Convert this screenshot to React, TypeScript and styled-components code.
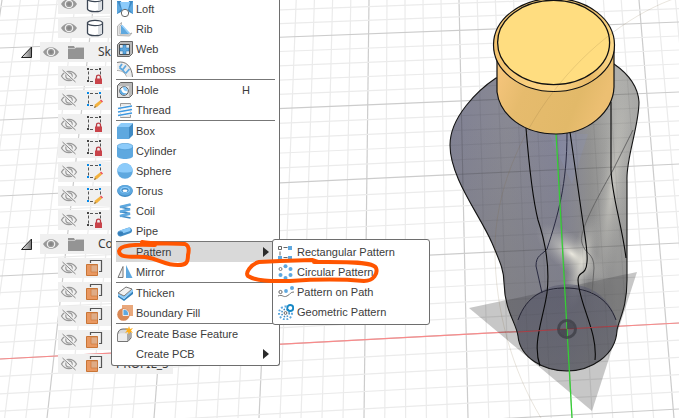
import React from "react";
import styled, { createGlobalStyle } from "styled-components";

const GlobalStyle = createGlobalStyle`
  body {
    margin: 0;
    background: #ffffff;
    color: #3c3c3c;
    font-family: "Liberation Sans", Arial, sans-serif;
    font-size: 11px;
  }
`;

const Workspace = styled.main`
  position: relative;
  display: flex;
  min-height: 100vh;
  overflow: hidden;
`;

const Viewport = styled.svg`
  position: absolute;
  inset: 0;
  width: 100%;
  height: 100%;
`;

const Browser = styled.ul`
  position: relative;
  display: flex;
  flex-direction: column;
  gap: 4px;
  margin: -6px 0 0;
  padding: 0;
  list-style: none;
`;

const TreeRow = styled.li<{ $folder?: boolean }>`
  display: flex;
  align-items: center;
  height: 20px;
  padding-left: ${(p) => (p.$folder ? 20 : 58)}px;
`;

const TreeCell = styled.div<{ $folder?: boolean }>`
  display: flex;
  align-items: center;
  box-sizing: border-box;
  height: 20px;
  width: ${(p) => (p.$folder ? 72 : 115)}px;
  padding-left: 2px;
  overflow: hidden;
  background: #f0f0f0;
`;

const PlainButton = styled.button`
  display: flex;
  padding: 0;
  border: 0;
  background: none;
`;

const Toggle = styled(PlainButton)`
  width: 20px;
`;

const TreeIcon = styled.span`
  display: flex;
  width: 18px;
  margin: 0 12px 0 8px;
`;

const TreeLabel = styled.span`
  flex: 1;
  min-width: 0;
  overflow: hidden;
  font-family: "Noto Sans", sans-serif;
  font-size: 12px;
  line-height: 18px;
  white-space: nowrap;
`;

const Menu = styled.div`
  position: absolute;
  top: -1px;
  left: 111px;
  box-sizing: border-box;
  width: 169px;
  padding: 0 4px 1px;
  border: 1px solid #6e6e6e;
  border-top: 0;
  border-radius: 0 0 3px 3px;
  background: #ffffff;
`;

const MenuSlot = styled.div`
  position: relative;
`;

const Submenu = styled.div`
  position: absolute;
  top: -3px;
  left: 156px;
  box-sizing: border-box;
  width: 158px;
  padding: 2px 4px;
  border: 1px solid #6e6e6e;
  border-radius: 3px;
  background: #ffffff;
`;

const MenuItem = styled.button<{ $active?: boolean }>`
  display: flex;
  align-items: center;
  width: 100%;
  height: 20px;
  padding: 0 6px 0 1px;
  border: 0;
  background: ${(p) => (p.$active ? "#d9d9d9" : "transparent")};
  color: #3c3c3c;
  font-family: inherit;
  font-size: 11px;
  line-height: 20px;
  text-align: left;
  white-space: nowrap;
`;

const MenuIcon = styled.span`
  display: flex;
  width: 16px;
  height: 16px;
  margin-right: 3px;
`;

const MenuText = styled.span`
  flex: 1;
`;

const Shortcut = styled.kbd`
  width: 27px;
  font-family: inherit;
  font-size: 11px;
`;

const Separator = styled.hr`
  height: 1px;
  margin: 0;
  border: 0;
  background: #777777;
`;

const Markup = styled.svg`
  position: absolute;
  top: 0;
  left: -1px;
  overflow: visible;
  pointer-events: none;
`;

const Icon = ({ children, size = 16 }: { children: React.ReactNode; size?: number }) => (
  <svg width={size} height={size} viewBox={`0 0 ${size} ${size}`} fill="none" aria-hidden="true">
    {children}
  </svg>
);

const BLUE = "#5ea8df";
const DEEP = "#3f8ac4";
const PALE = "#8ccbfa";

const icons: Record<string, React.ReactNode> = {
  Loft: (
    <Icon>
      <path d="M0 0h4l2 9-2 2-4 2zM16 0h-4l-2 9 2 2 4 2z" fill={DEEP} />
      <path d="M3 1h10l-2 8H5z" fill={PALE} />
      <path d="M0 0l4 8-4 5z" fill={BLUE} />
      <path d="M16 0l-4 8 4 5z" fill={BLUE} />
      <circle cx="8" cy="12" r="3.7" fill="#fff" stroke="#666" />
    </Icon>
  ),
  Rib: (
    <Icon>
      <path d="M.5 14.500V5l4-3.500v2L3 5v8h9l3-1-2.500 3z" fill="#e4e4e4" stroke="#a5a5a5" strokeWidth=".8" />
      <path d="M4 4l8 9H4z" fill={BLUE} />
      <path d="M4 4h1.500l7.500 8-1 1z" fill={PALE} />
    </Icon>
  ),
  Web: (
    <Icon>
      <path d="M.5 3.500l3-3h12v12l-3 3H.5z" fill="#b9b9b9" stroke="#666" />
      <path d="M2.500 3.500h10v10h-10z" fill="#e0e9f0" stroke="#4d4d4d" />
      <path d="M6 4h3v3h3v3H9v3H6v-3H3V7h3z" fill={BLUE} stroke="#276ca4" strokeWidth=".5" />
    </Icon>
  ),
  Emboss: (
    <Icon>
      <path d="M0 1.500C9-1 15 6 15.500 16H10C9 11 5 8.500 0 9z" fill="#ececec" />
      <path d="M0 1.500C9-1 15 6 15.500 16" stroke="#777" />
      <path d="M2.500 6.500l3 2.500 3 3.500M5.500 9L9 4.500M2.500 6.500L5 3M8.500 12.500L12.500 8" stroke={BLUE} strokeWidth="1.800" />
      <path d="M0 9.500c5 0 8 2 9.500 6" stroke="#aaa" />
    </Icon>
  ),
  Hole: (
    <Icon>
      <path d="M.5 3.500l3-3h12v12l-3 3H.5z" fill="#b9b9b9" stroke="#666" />
      <path d="M1 4h11v11H1z" fill="#dedede" />
      <circle cx="7" cy="9" r="4.300" fill="#fff" stroke="#555" />
      <path d="M4 7c1 4 3 5 6 4-1 2-5 3-7 0-.5-2 0-3 1-4z" fill={BLUE} />
      <path d="M6 5c2-1 5 1 4.500 4C8 10 6 8 6 5z" fill={PALE} />
    </Icon>
  ),
  Thread: (
    <Icon>
      <path d="M3.500 1.500h10v14h-10z" fill="#e8e8e8" stroke="#999" />
      <path d="M1 6.500L15 4M1 10l14-2.500M1 13.500L15 11" stroke="#fff" strokeWidth="3" />
      <path d="M1 6.500L15 4M1 10l14-2.500M1 13.500L15 11" stroke="#3f98df" strokeWidth="1.500" />
    </Icon>
  ),
  Box: (
    <Icon>
      <path d="M0 4h12v12H0z" fill={BLUE} />
      <path d="M0 4l4-4h12l-4 4z" fill={PALE} />
      <path d="M12 4l4-4v12l-4 4z" fill={DEEP} />
    </Icon>
  ),
  Cylinder: (
    <Icon>
      <path d="M0 3v10c0 4 16 4 16 0V3z" fill={BLUE} />
      <ellipse cx="8" cy="3.500" rx="8" ry="3.200" fill={PALE} stroke={DEEP} strokeWidth=".5" />
    </Icon>
  ),
  Sphere: (
    <Icon>
      <circle cx="8" cy="8" r="7.800" fill={BLUE} />
      <path d="M.2 8a7.800 7.800 0 0 1 15.600 0c-3 2-12 2-15.600 0z" fill={PALE} />
    </Icon>
  ),
  Torus: (
    <Icon>
      <ellipse cx="8" cy="8" rx="7.800" ry="6" fill={DEEP} />
      <ellipse cx="8" cy="7.300" rx="7.600" ry="5.200" fill={BLUE} />
      <ellipse cx="8" cy="7" rx="5" ry="3.200" fill={PALE} />
      <ellipse cx="8" cy="7.300" rx="3.500" ry="2.200" fill={DEEP} />
      <ellipse cx="8" cy="7.700" rx="2.500" ry="1.300" fill="#fff" />
    </Icon>
  ),
  Coil: (
    <Icon>
      <path d="M13.500 1.500L3 4l10 2.200L3 8.700l10 2L3 13l10.500 2" stroke={DEEP} strokeWidth="1.700" />
      <path d="M13.500 1.500L3 4M13 6.200L3 8.700M13 10.700L3 13" stroke={BLUE} strokeWidth="2.500" />
    </Icon>
  ),
  Pipe: (
    <Icon>
      <path d="M3.500 10.500L12 7.500" stroke={DEEP} strokeWidth="6" strokeLinecap="round" />
      <path d="M4 9L12 6.500" stroke={PALE} strokeWidth="3.500" strokeLinecap="round" />
      <ellipse cx="3.800" cy="10.300" rx="2.500" ry="2" fill="#377fb9" />
    </Icon>
  ),
  Mirror: (
    <Icon>
      <path d="M6 2.500v11H1z" fill="#eee" stroke="#777" />
      <path d="M9 1l6.500 13H9z" fill={BLUE} />
    </Icon>
  ),
  Thicken: (
    <Icon>
      <path d="M1 10l6 4 9-8v3l-9 7-6-4z" fill="#3483bd" />
      <path d="M1 8l6 3 9-7v2l-9 8-6-4z" fill={PALE} />
      <path d="M1 8l8-6 6 2-8 7z" fill="#f2f2f2" stroke="#777" />
    </Icon>
  ),
  "Boundary Fill": (
    <Icon>
      <path d="M5 0h11v11H5z" fill="#e9a87c" />
      <circle cx="6.500" cy="9.500" r="6.300" fill="#d98855" />
      <path d="M6 4.500c4-.5 6 2 5.500 6H6z" fill={BLUE} stroke="#fff" strokeWidth=".8" />
    </Icon>
  ),
  "Create Base Feature": (
    <Icon>
      <path d="M.7 8C1 5 3 3 6 3h5l3 4v5l-3 3.400H.7z" fill="#d7d7d7" stroke="#666" />
      <path d="M1 8c2-1 7-1 9 0v7H1z" fill="#ececec" />
      <path d="M10 8v7.500l4-4V6z" fill="#aaa" />
      <path d="M12 0l1 3 3-1-2 2.500 2 2.500-3-1-1 3-1-3-3 1 2-2.500L8 2l3 1z" fill="#ffad18" />
    </Icon>
  ),
  "Rectangular Pattern": (
    <Icon>
      <path d="M.5 2.500h3v3h-3z" stroke="#666" />
      <path d="M5.500 3.500h4M2 7.500v4M5.500 13.500h4" stroke="#666" />
      <path d="M10 2h4v4h-4zM0 12h4v4H0zM10 12h4v4h-4z" fill={BLUE} />
    </Icon>
  ),
  "Circular Pattern": (
    <Icon>
      <circle cx="2.500" cy="5" r="1.500" stroke="#777" />
      <g fill={BLUE}>
        <circle cx="7.500" cy="2.200" r="2" />
        <circle cx="12.500" cy="5" r="2" />
        <circle cx="12.500" cy="11" r="2" />
        <circle cx="7.500" cy="14" r="2" />
        <circle cx="2.500" cy="11" r="2" />
      </g>
    </Icon>
  ),
  "Pattern on Path": (
    <Icon>
      <circle cx="2.500" cy="8" r="1.600" stroke="#666" />
      <circle cx="8" cy="7" r="1.900" fill={BLUE} />
      <circle cx="14" cy="4" r="2" fill={BLUE} />
      <path d="M0 12c5-2 5 2 9 0s3-4 7-4" stroke="#777" />
    </Icon>
  ),
  "Geometric Pattern": (
    <Icon>
      <circle cx="7.500" cy="9" r="6.500" stroke={BLUE} strokeWidth="2" strokeDasharray="1.800 1.800" />
      <circle cx="7.500" cy="9" r="3.700" stroke={DEEP} strokeWidth="1.500" strokeDasharray="1.500 1.500" />
      <circle cx="7.500" cy="9" r="1.400" fill="#fff" stroke="#666" />
      <circle cx="12.200" cy="4" r="3" fill="#fff" stroke="#1688c6" strokeWidth="1.800" />
      <path d="M8.500 2l2 1M9 5.500h2" stroke="#1688c6" />
    </Icon>
  ),
};

const Eye = ({ hidden }: { hidden?: boolean }) => (
  <svg width="18" height="14" viewBox="0 0 18 14" fill="none" aria-hidden="true">
    {hidden ? (
      <>
        <path d="M1.500 7C5 .8 13 .8 16.500 7 13 13.200 5 13.200 1.500 7z" stroke="#999" strokeWidth="1.200" />
        <circle cx="9" cy="7" r="3.200" stroke="#999" strokeWidth="1.200" />
        <path d="M3 1l13 12" stroke="#f0f0f0" strokeWidth="2.500" />
        <path d="M2.500 1l13 12" stroke="#858585" />
      </>
    ) : (
      <>
        <path d="M1 7C5 .5 13 .5 17 7 13 13.500 5 13.500 1 7z" fill="#999" />
        <circle cx="9" cy="7" r="3.700" stroke="#f0f0f0" strokeWidth="1.200" />
        <circle cx="9" cy="7" r="1.800" fill="#858585" />
      </>
    )}
  </svg>
);

const Body = () => (
  <Icon size={18}>
    <path d="M1.500 4v10c1 3.500 14 3.500 15 0V4z" fill="#fff" stroke="#3c4654" strokeWidth="1.300" />
    <path d="M12 4h4v11l-4 1z" fill="#dcdfe3" />
    <ellipse cx="9" cy="4" rx="7.500" ry="2.700" fill="#fff" stroke="#3c4654" strokeWidth="1.200" />
  </Icon>
);

const Sketch = ({ locked }: { locked: boolean }) => (
  <Icon size={18}>
    <path d="M4 2.500h8M4 14.500h5" stroke="#555" strokeDasharray="3 2" />
    <path d="M2.500 4.500v8M14.500 4.500v5" stroke="#555" strokeDasharray="3 2" />
    <path d="M1 1h2v2H1zM13 1h2v2h-2zM1 13h2v2H1z" fill={locked ? "#444" : "#078ae8"} />
    {locked ? (
      <>
        <path d="M10.500 12V10c0-2.500 4-2.500 4 0v2" stroke="#b83a42" strokeWidth="1.300" />
        <path d="M9 11.500h7V17H9z" fill="#c9434a" />
      </>
    ) : (
      <>
        <path d="M8 17l1-3.500 5-4 2 2-5 4.500z" fill="#f3b23e" />
        <path d="M14 9.500l1-1 2 2-1 1z" fill="#ed4754" />
        <path d="M8 17l1-2 1 1z" fill="#555" />
      </>
    )}
  </Icon>
);

const Plane = () => (
  <Icon size={18}>
    <path d="M.5 5.500h11v11H.5z" fill="#e99861" stroke="#c97536" />
    <path d="M5 6h6.500v7H5z" fill="#dfac87" stroke="#c97536" strokeWidth=".6" />
    <path d="M4.500 4V1.500h11v11H13" stroke="#555" strokeWidth="1.200" />
  </Icon>
);

const Folder = () => (
  <svg width="18" height="16" viewBox="0 0 18 16" aria-hidden="true">
    <path d="M0 2h6l1 2h9v11H0z" fill="#949494" />
    <path d="M0 4.500h7l1-1h8" stroke="#c7c7c7" fill="none" />
  </svg>
);

const MajorColumns = [
  [-90, -166], [2, -59], [94, 47], [186, 154], [278, 259],
  [369, 364], [459, 468], [550, 572], [639, 674], [730, 778],
];
const MajorRows = [[-21, -45], [48, 22], [120, 92], [196, 164], [276, 243], [359, 323], [446, 409], [538, 499]];

const subdivide = (pairs: number[][]) =>
  pairs.slice(0, -1).flatMap(([a, b], i) =>
    [0, 1, 2, 3, 4].map((k) => ({
      a: a + ((pairs[i + 1][0] - a) * k) / 5,
      b: b + ((pairs[i + 1][1] - b) * k) / 5,
      major: k === 0,
    })),
  );

const lineStyle = (major: boolean) => ({ stroke: major ? "#cccccc" : "#ebebeb", strokeWidth: 1.2 });

const BOTTLE =
  "M496 78C478 90 450 117 450 145C450 178 480 215 492 243C500 262 504 270 504 283C505 312 516 322 518 336C520 358 544 371 567 371C590 371 616 356 617 330C619 319 627 308 627 280V180C626 158 639 126 639 102C638 86 627 73 614 64Z";

const Scene = () => (
  <Viewport viewBox="0 0 679 418" preserveAspectRatio="xMinYMin slice" role="img" aria-label="Bottle model">
    <defs>
      <linearGradient id="glass" x1="450" x2="640" y1="0" y2="0" gradientUnits="userSpaceOnUse">
        <stop offset="0" stopColor="#6f7085" />
        <stop offset=".3" stopColor="#787884" />
        <stop offset=".58" stopColor="#71728a" />
        <stop offset=".74" stopColor="#858584" />
        <stop offset=".88" stopColor="#a5a5a1" />
        <stop offset="1" stopColor="#9a9a98" />
      </linearGradient>
      <linearGradient id="shade" x1="0" x2="0" y1="120" y2="290" gradientUnits="userSpaceOnUse">
        <stop offset="0" stopColor="#7e7e80" stopOpacity="0" />
        <stop offset="1" stopColor="#7b7b7d" stopOpacity=".55" />
      </linearGradient>
      <radialGradient id="shine">
        <stop offset="0" stopColor="#efede2" stopOpacity=".95" />
        <stop offset=".35" stopColor="#d0cfc7" stopOpacity=".6" />
        <stop offset="1" stopColor="#aaa" stopOpacity="0" />
      </radialGradient>
      <linearGradient id="capSide" x1="0" x2="1" y1="0" y2=".3">
        <stop offset="0" stopColor="#fac880" />
        <stop offset=".35" stopColor="#e6bb6d" />
        <stop offset=".8" stopColor="#e2b969" />
        <stop offset="1" stopColor="#ecbf72" />
      </linearGradient>
      <linearGradient id="capRim" x1="0" x2="1" y1="0" y2="0">
        <stop offset="0" stopColor="#f3c36f" />
        <stop offset=".5" stopColor="#ffd98a" />
        <stop offset=".8" stopColor="#e8b967" />
        <stop offset="1" stopColor="#ffdc8b" />
      </linearGradient>
      <linearGradient id="base" x1="0" x2="0" y1="0" y2="1">
        <stop offset="0" stopColor="#55566c" />
        <stop offset="1" stopColor="#62636d" />
      </linearGradient>
      <clipPath id="body"><path d={BOTTLE} /></clipPath>
    </defs>
    {subdivide(MajorColumns).map((l, i) => (
      <line key={`c${i}`} x1={l.a} y1="0" x2={l.b} y2="418" {...lineStyle(l.major)} />
    ))}
    {subdivide(MajorRows).map((l, i) => (
      <line key={`r${i}`} x1="0" y1={l.a} x2="679" y2={l.b} {...lineStyle(l.major)} />
    ))}
    <path d="M0 359L679 323" stroke="#f98a8a" strokeWidth="1.200" />
    <path d="M469 308L637 272L592 411Z" fill="#000" fillOpacity=".22" />
    <path d={BOTTLE} fill="url(#glass)" fillOpacity=".88" />
    <path d={BOTTLE} fill="url(#shade)" />
    <g clipPath="url(#body)" fill="none">
      <ellipse cx="582" cy="262" rx="13" ry="50" transform="rotate(15 582 262)" fill="url(#shine)" />
      <ellipse cx="572" cy="254" rx="44" ry="18" transform="rotate(38 572 254)" fill="url(#shine)" />
      <ellipse cx="612" cy="190" rx="15" ry="130" transform="rotate(8 612 190)" fill="url(#shine)" fillOpacity=".5" />
      <path d="M549 134l23 50 16-50z" fill="#8f95bd" fillOpacity=".22" />
      <path d="M504 301L627 274V330L600 371H530L500 330Z" fill="#404044" fillOpacity=".25" />
      <path d="M515 330C525 270 608 270 617 325C617 356 595 371 567 371C538 371 520 353 515 330Z" fill="url(#base)" fillOpacity=".5" />
      {subdivide(MajorRows).map((l) => (
        <line key={l.a} x1="0" y1={l.a} x2="679" y2={l.b} stroke="#333" strokeOpacity={l.major ? 0.18 : 0.06} />
      ))}
      {subdivide(MajorColumns).map((l) => (
        <line key={l.a} x1={l.a} y1="0" x2={l.b} y2="418" stroke="#333" strokeOpacity={l.major ? 0.18 : 0.06} />
      ))}
      <path d="M518 320C527 295 544 288 565 288C590 288 608 298 616 320" stroke="#242433" />
      <path d="M567 133C567 185 558 215 547 249C542 255 536 255 536 266L542 293" stroke="#292a40" />
      <path d="M633 130L613 170C596 200 578 233 582 243C585 255 594 252 594 268L592 293" stroke="#666" />
    </g>
    <path d={BOTTLE} fill="none" stroke="#151515" strokeWidth="1.100" />
    <g fill="none" stroke="#080808" strokeWidth="1.100">
      <path d="M526 128C529 165 533 200 538 220C546 244 550 267 547 293C543 320 532 343 540 366" />
      <path d="M570 132L583 223C586 243 588 253 587 262C586 277 578 270 578 280C579 304 598 332 595 360" />
      <path d="M611 102V170C612 197 622 225 626 258" />
    </g>
    <path d="M518 332L617 326" stroke="#ab4047" strokeWidth="1.200" />
    <path d="M556 133L572 418" stroke="#36cf36" strokeWidth="1.300" />
    <circle cx="567" cy="329" r="8.500" fill="none" stroke="#393b42" strokeOpacity=".7" strokeWidth="3" />
    <path d="M567 329V322A7 7 0 0 1 574 329ZM567 329V336A7 7 0 0 1 560 329Z" fill="#393b42" fillOpacity=".6" />
    <path d="M497 56V92C500 115 523 134 556 134C588 134 613 112 614 87V48Z" fill="url(#capSide)" stroke="#111" strokeWidth="1.200" />
    <ellipse cx="554" cy="45" rx="60.500" ry="46.500" fill="url(#capRim)" stroke="#111" strokeWidth="1.200" />
    <ellipse cx="553.600" cy="42.500" rx="56" ry="42.200" fill="#ffdd80" stroke="#111" strokeWidth="1.300" />
    <path d="M679 -3C590 26 495 135 495 250C495 310 512 370 541 418" fill="none" stroke="#775f30" strokeOpacity=".16" />
  </Viewport>
);

type Node = { kind: "body" | "folder" | "locked" | "open" | "plane"; label?: string };

const tree: Node[] = [
  { kind: "body" },
  { kind: "body" },
  { kind: "folder", label: "Sketches" },
  { kind: "locked" },
  { kind: "open" },
  { kind: "locked" },
  { kind: "locked" },
  { kind: "open" },
  { kind: "open" },
  { kind: "locked" },
  { kind: "folder", label: "Construction" },
  { kind: "plane" },
  { kind: "plane" },
  { kind: "plane" },
  { kind: "plane" },
  { kind: "plane", label: "PROFIL_5" },
];

const TreeNode = ({ kind, label }: Node) => {
  const folder = kind === "folder";
  return (
    <TreeRow $folder={folder}>
      {folder && (
        <Toggle aria-label={`Collapse ${label}`}>
          <svg width="14" height="14" viewBox="0 0 14 14" aria-hidden="true">
            <defs>
              <linearGradient id="fold">
                <stop offset="0" stopColor="#eee" />
                <stop offset="1" stopColor="#777" />
              </linearGradient>
            </defs>
            <path d="M1.500 12.500h10V2z" fill="url(#fold)" stroke="#222" />
          </svg>
        </Toggle>
      )}
      <TreeCell $folder={folder}>
        <PlainButton aria-label="Toggle visibility">
          <Eye hidden={!folder && kind !== "body"} />
        </PlainButton>
        <TreeIcon>
          {folder && <Folder />}
          {kind === "body" && <Body />}
          {kind === "plane" && <Plane />}
          {(kind === "locked" || kind === "open") && <Sketch locked={kind === "locked"} />}
        </TreeIcon>
        {label && <TreeLabel>{label}</TreeLabel>}
      </TreeCell>
    </TreeRow>
  );
};

const Arrow = () => (
  <svg width="6" height="12" viewBox="0 0 6 12" aria-hidden="true">
    <path d="M0 1v10l6-5z" fill="#2b2b2b" />
  </svg>
);

type EntryProps = { name: string; shortcut?: string; more?: boolean; active?: boolean };

const Entry = ({ name, shortcut, more, active }: EntryProps) => (
  <MenuItem role="menuitem" $active={active} aria-haspopup={more ? "menu" : undefined}>
    <MenuIcon>{icons[name]}</MenuIcon>
    <MenuText>{name}</MenuText>
    {shortcut && <Shortcut>{shortcut}</Shortcut>}
    {more && <Arrow />}
  </MenuItem>
);

const App = () => (
  <>
    <GlobalStyle />
    <Workspace>
      <Scene />
      <Browser>
        {tree.map((node, i) => (
          <TreeNode key={i} {...node} />
        ))}
      </Browser>
      <Menu role="menu" aria-label="Create">
        {["Loft", "Rib", "Web", "Emboss"].map((n) => <Entry key={n} name={n} />)}
        <Separator />
        <Entry name="Hole" shortcut="H" />
        <Entry name="Thread" />
        <Separator />
        {["Box", "Cylinder", "Sphere", "Torus", "Coil", "Pipe"].map((n) => <Entry key={n} name={n} />)}
        <Separator />
        <MenuSlot>
          <Entry name="Pattern" more active />
          <Submenu role="menu" aria-label="Pattern">
            {["Rectangular Pattern", "Circular Pattern", "Pattern on Path", "Geometric Pattern"].map((n) => (
              <Entry key={n} name={n} />
            ))}
          </Submenu>
        </MenuSlot>
        <Entry name="Mirror" />
        <Separator />
        <Entry name="Thicken" />
        <Entry name="Boundary Fill" />
        <Separator />
        <Entry name="Create Base Feature" />
        <Entry name="Create PCB" more />
        <Markup
          width="280"
          height="300"
          viewBox="111 -1 280 300"
          fill="none"
          stroke="#ff5500"
          strokeWidth="4"
          strokeLinecap="round"
          strokeLinejoin="round"
        >
          <path d="M142 242C150 244 174 243 185 244C190 246 189 251 188 255C188 263 186 265 178 265C164 265 160 259 145 257C135 256 119 259 119 251C120 245 134 244 155 245" />
          <path d="M318 262L312 260L280 261L259 262C251 264 245 273 248 276C257 282 276 281 290 281C318 279 342 279 364 281C374 281 378 273 376 268C373 261 340 262 314 262" />
        </Markup>
      </Menu>
    </Workspace>
  </>
);

export default App;
